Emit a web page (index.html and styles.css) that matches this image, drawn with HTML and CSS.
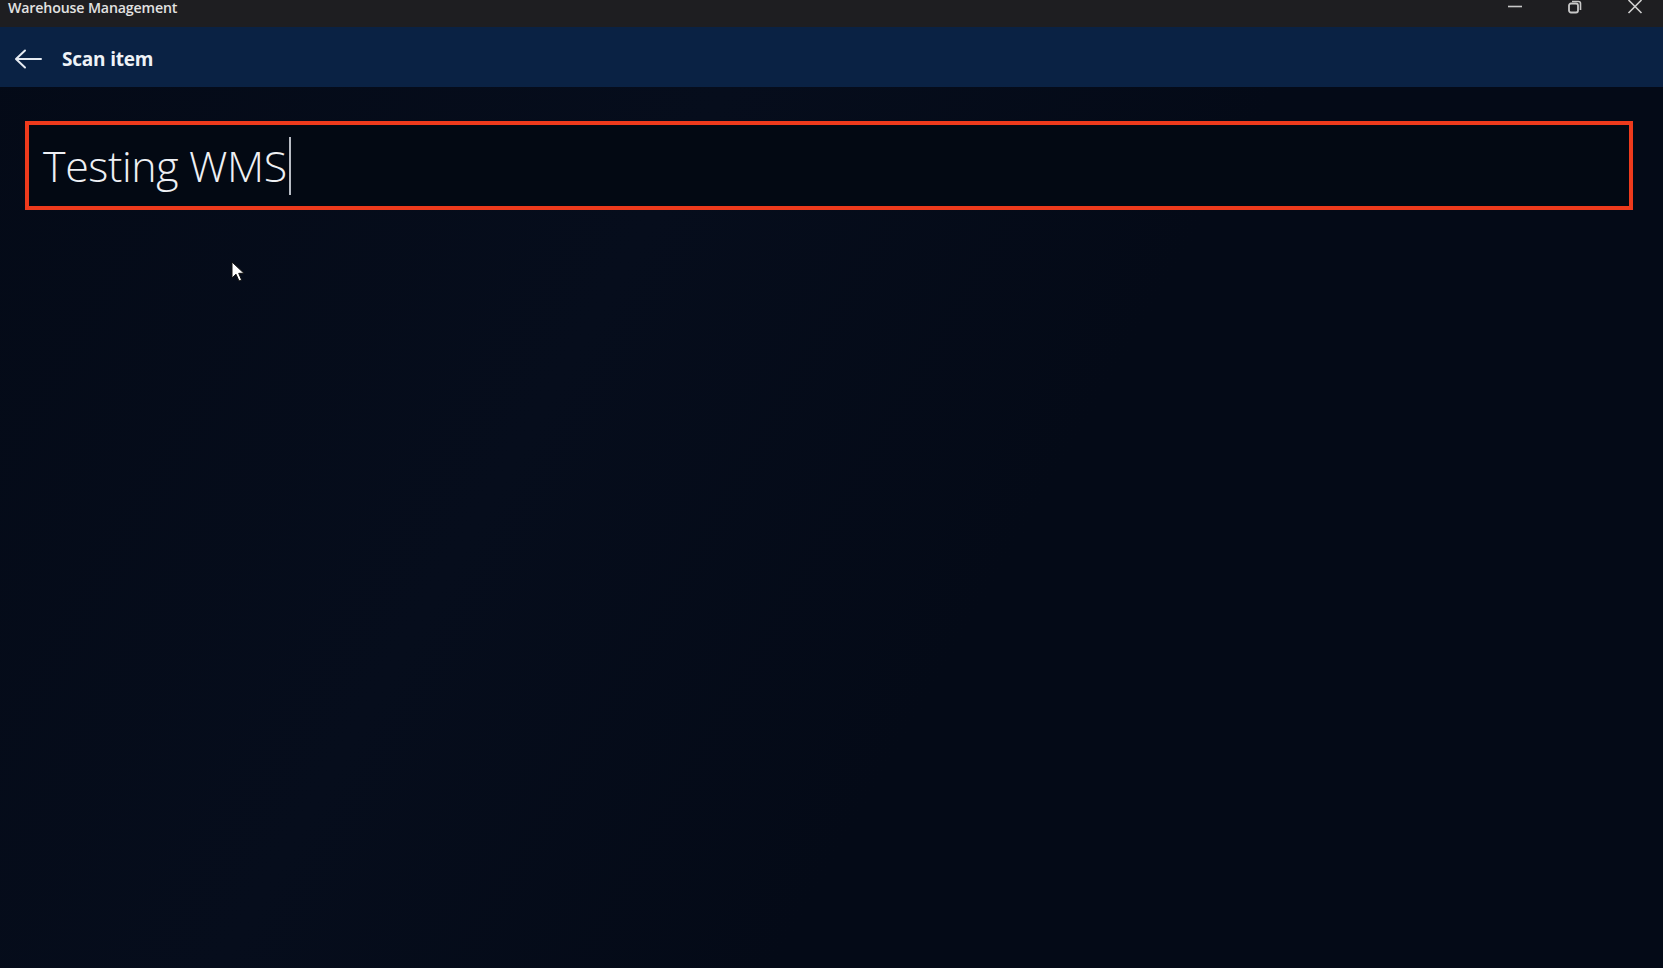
FILE: index.html
```html
<!DOCTYPE html>
<html lang="en">
<head>
<meta charset="utf-8">
<title>Warehouse Management</title>
<link rel="stylesheet" href="styles.css">
</head>
<body>
<div class="window">
  <div class="titlebar">
    <span class="app-title">Warehouse Management</span>
    <div class="controls">
      <span class="ctl">
        <svg width="16" height="14" viewBox="0 0 16 14"><line x1="1" y1="6.5" x2="15" y2="6.5" stroke="#c8c8c8" stroke-width="1.6"/></svg>
      </span>
      <span class="ctl">
        <svg width="16" height="14" viewBox="0 0 16 14"><rect x="2" y="3.5" width="9" height="9" rx="2" fill="none" stroke="#c8c8c8" stroke-width="1.8"/><path d="M5 1.5 H11.5 a2 2 0 0 1 2 2 V10" fill="none" stroke="#c8c8c8" stroke-width="1.6"/></svg>
      </span>
      <span class="ctl">
        <svg width="16" height="14" viewBox="0 0 16 14"><path d="M1.5 0 L14.5 13 M14.5 0 L1.5 13" stroke="#d0d0d0" stroke-width="1.6"/></svg>
      </span>
    </div>
  </div>
  <header class="appbar">
    <span class="back">
      <svg width="28" height="20" viewBox="0 0 28 20"><path d="M27 10 H2.5 M11 1.5 L2 10 L11 18.5" fill="none" stroke="#e6ebf2" stroke-width="2" stroke-linecap="round" stroke-linejoin="round"/></svg>
    </span>
    <span class="page-title">Scan item</span>
  </header>
  <main class="content">
    <div class="scan-field">
      <span class="scan-text">Testing WMS</span><span class="caret"></span>
    </div>
  </main>
  <svg class="pointer" width="16" height="22" viewBox="0 0 16 22"><path d="M1 1 L1 17 L5 13.2 L8 20 L10.6 18.9 L7.7 12.3 L13 12.3 Z" fill="#ffffff" stroke="#111" stroke-width="1"/></svg>
</div>
</body>
</html>
```

FILE: styles.css
```css
html, body {
  margin: 0;
  padding: 0;
  height: 100%;
  overflow: hidden;
  background: #040a17;
}

.window {
  position: relative;
  height: 968px;
  display: flex;
  flex-direction: column;
  font-family: "Open Sans", "Noto Sans", "Liberation Sans", sans-serif;
  background: linear-gradient(120deg, #040a17 0%, #060d1c 35%, #040a17 60%, #040a17 100%);
}

.titlebar {
  height: 27px;
  flex: 0 0 27px;
  background: #1e1e21;
  display: flex;
  align-items: flex-start;
  justify-content: space-between;
}

.app-title {
  color: #e2e2e2;
  font-size: 14.2px;
  font-weight: 600;
  line-height: 16px;
  padding-left: 8px;
  letter-spacing: -0.15px;
}

.controls {
  display: flex;
  align-items: flex-start;
  gap: 44px;
  padding-right: 20px;
}

.ctl {
  display: flex;
  width: 16px;
  height: 14px;
}

.appbar {
  height: 60px;
  flex: 0 0 60px;
  background: #0a2244;
  display: flex;
  align-items: center;
  gap: 20px;
  padding-left: 14px;
  padding-top: 3px;
  box-sizing: border-box;
}

.back {
  display: flex;
  width: 28px;
  height: 20px;
}

.page-title {
  color: #eef2f7;
  font-size: 19px;
  font-weight: 700;
  letter-spacing: -0.2px;
}

.content {
  flex: 1;
  padding: 34px 30px 0 25px;
}

.scan-field {
  height: 89px;
  box-sizing: border-box;
  border: 4px solid #ee3a1c;
  display: flex;
  align-items: center;
  padding-left: 14px;
  background: #030913;
}

.scan-text {
  color: #eef0f4;
  font-size: 43px;
  font-weight: 350;
  letter-spacing: -0.4px;
  line-height: 1;
}

.caret {
  width: 2px;
  height: 58px;
  background: #b8bcc4;
  margin-left: 2px;
}

.pointer {
  position: absolute;
  left: 231px;
  top: 261px;
}
```
